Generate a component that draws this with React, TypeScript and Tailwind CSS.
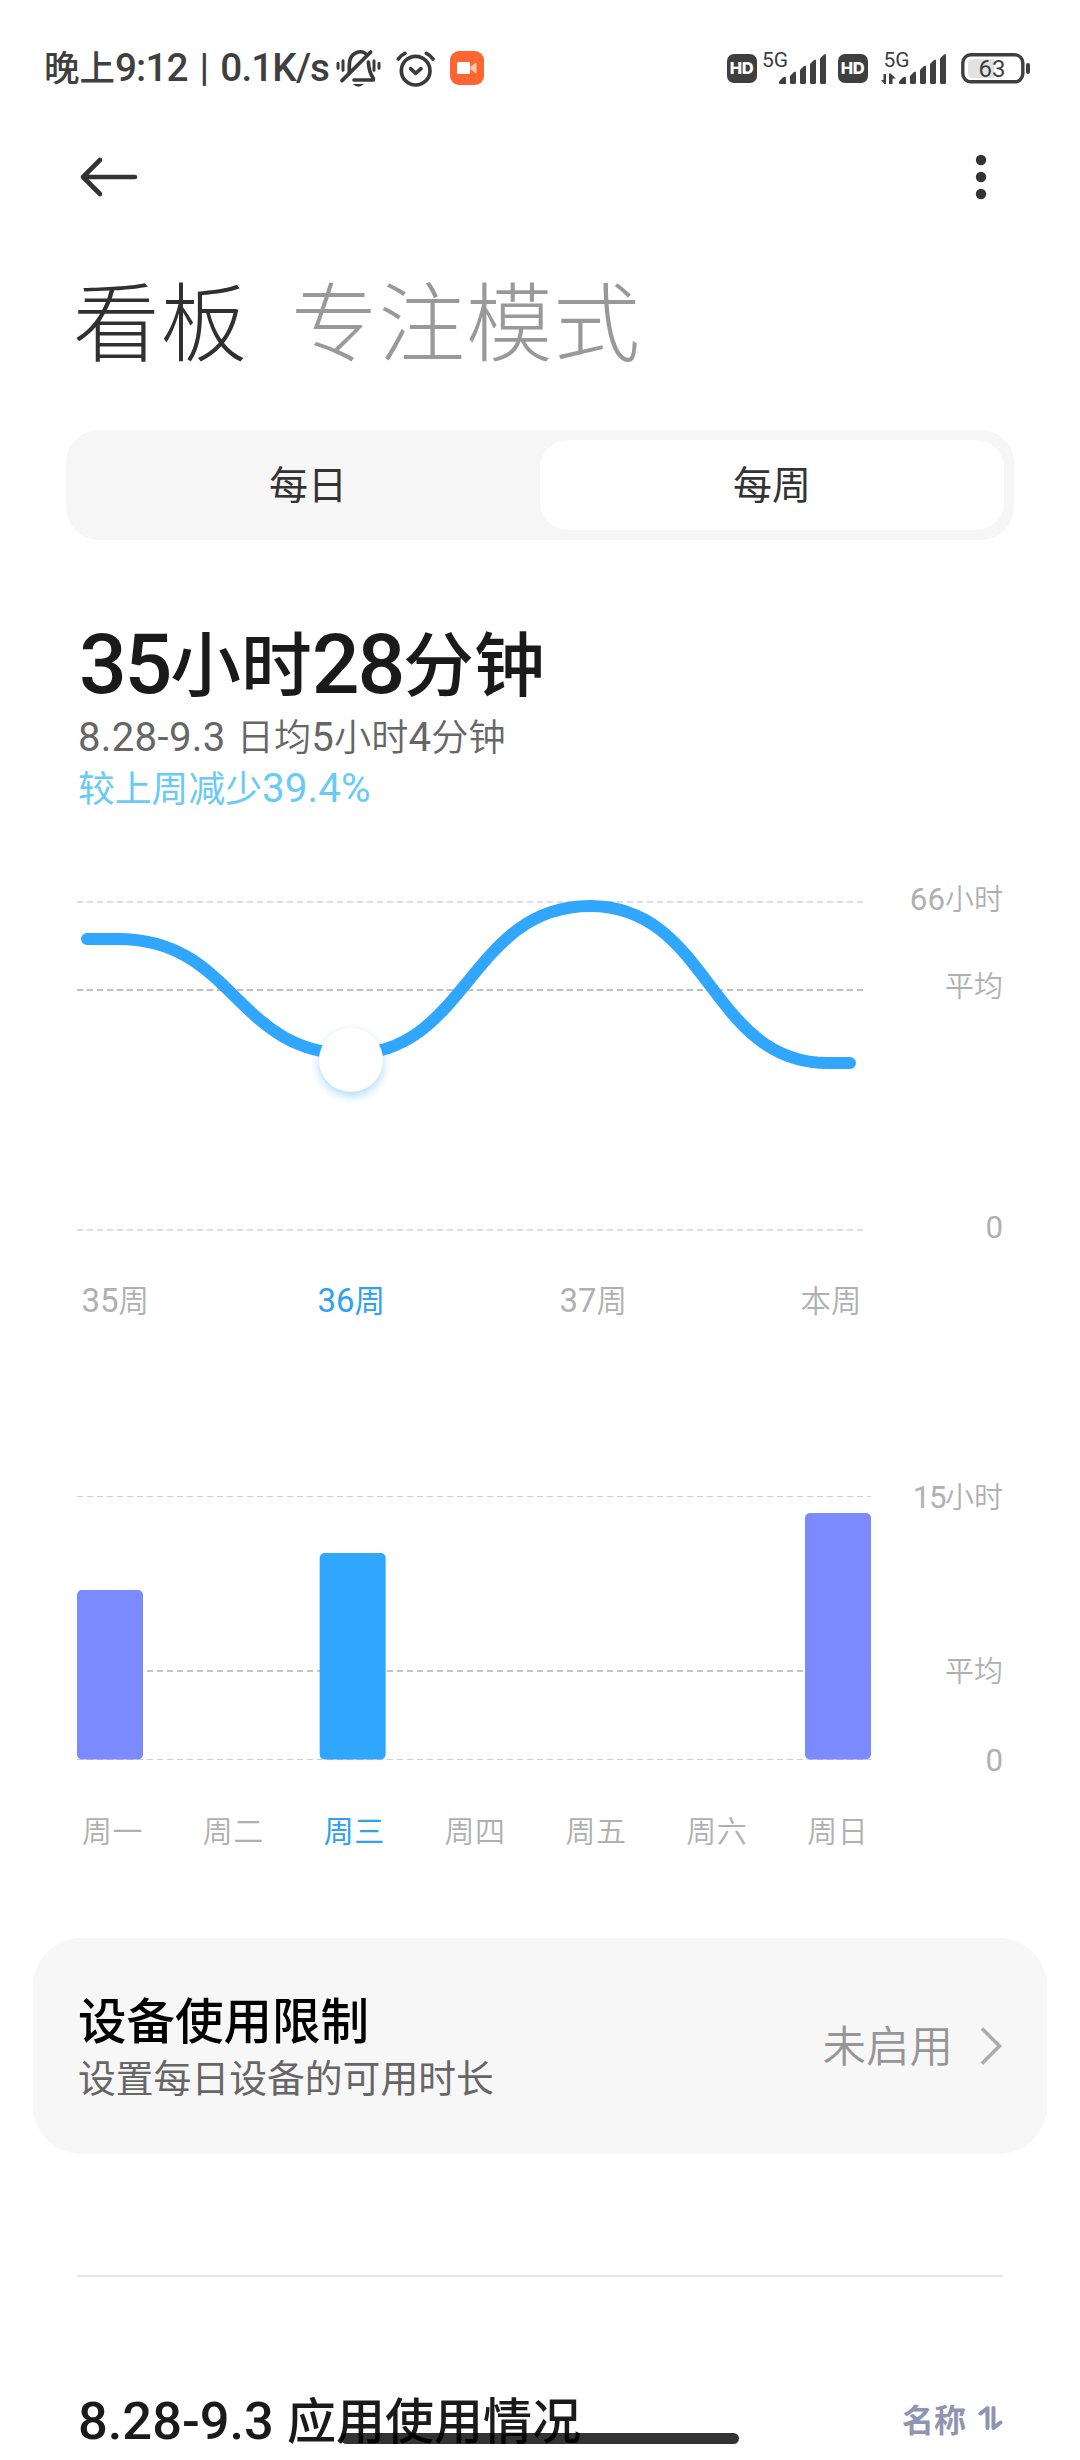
import type { ReactNode } from 'react';

const WEEKS = ['35周', '36周', '37周', '本周'];

const DAYS = [
  { label: '周一', height: 169.5 },
  { label: '周二', height: 0 },
  { label: '周三', height: 206.5, active: true },
  { label: '周四', height: 0 },
  { label: '周五', height: 0 },
  { label: '周六', height: 0 },
  { label: '周日', height: 246.5 },
];

// Latin runs are set in Roboto and a bit larger than the hanzi around them
function Mixed({ text, latin = 'text-[1.08em] font-normal' }: { text: string; latin?: string }) {
  return (
    <>
      {text.split(/([\x21-\x7e]+)/).map((part, i) =>
        i % 2 ? (
          <span key={i} className={`font-[Roboto] leading-[0] ${latin}`}>{part}</span>
        ) : (
          part
        ),
      )}
    </>
  );
}

function Line({ className, children }: { className: string; children: ReactNode }) {
  return <div className={`flex items-center whitespace-pre ${className}`}><span>{children}</span></div>;
}

function HdBadge() {
  return (
    <div className="flex h-[29px] w-[30px] items-center justify-center rounded-[7px] bg-[#3f3f3f] font-[Inter] text-[16.5px] font-extrabold leading-none tracking-[-0.5px] text-white">
      HD
    </div>
  );
}

function Signal({ data = false }: { data?: boolean }) {
  return (
    <svg width="66" height="44" viewBox="0 -4 66 44" fill="#3f3f3f">
      <text x={data ? 2.5 : 1} y="17" fontFamily="Roboto" fontSize="21">5G</text>
      {data && <path d="M5 24v10h-1.500L0 30h2.500v-6zM8 34V23.500h1.500L15 28.500h-3.500V34z" />}
      <path d="M18 31.500l4-4.200q3-1.500 3 1V34h-5.500q-1.500 0-1.500-1.500z" />
      <path d="M29 26l4-4q2-1.500 2 1v9.500q0 1.500-1.500 1.500h-3q-1.500 0-1.500-1.500z" />
      <path d="M39 20l4-4q2-1.500 2 1v15.500q0 1.500-1.500 1.500h-3q-1.500 0-1.500-1.500z" />
      <path d="M49 14l4-4q2-1.500 2 1v21.500q0 1.500-1.500 1.500h-3q-1.500 0-1.500-1.500z" />
      <path d="M59 8.500l4-4q2-1.500 2 1v27q0 1.500-1.500 1.500h-3q-1.500 0-1.500-1.500z" />
    </svg>
  );
}

function Battery() {
  return (
    <svg width="69" height="31" viewBox="0 0 69 31">
      <rect x="1.800" y="1.800" width="60" height="27" rx="8" fill="none" stroke="#3f3f3f" strokeWidth="3.400" />
      <path d="M12 6h21v19H12q-5 0-5-5v-9q0-5 5-5z" fill="#e2e2e2" />
      <rect x="65" y="10" width="4" height="11" rx="2" fill="#3f3f3f" />
      <text x="31" y="23.800" textAnchor="middle" fontFamily="Roboto" fontSize="24" fill="#3f3f3f">63</text>
    </svg>
  );
}

function MutedBell() {
  return (
    <svg width="45" height="40" viewBox="0 0 135 120" fill="none" stroke="#3a3a3a" strokeWidth="11" strokeLinecap="round">
      <path d="M40 74V50C40 10 82 2 92 21" />
      <path d="M18 98L104 12" />
      <path d="M97 42c2 26 6 37 15 49v5H54" strokeLinejoin="round" />
      <path d="M50 108h34q-17 16-34 0z" fill="#3a3a3a" stroke="none" />
      <path d="M6 46v15M21 38v29M114 38v29M129 46v15" strokeWidth="9" />
    </svg>
  );
}

function AlarmIcon() {
  return (
    <svg width="40" height="37" viewBox="0 0 120 111" fill="none" stroke="#3a3a3a" strokeWidth="11" strokeLinecap="round">
      <circle cx="59" cy="62" r="43" />
      <path d="M44 56l15 14 16-14" strokeLinejoin="round" />
      <path d="M7 27Q15 15 27 10M91 10q12 5 20 17" />
    </svg>
  );
}

function RecorderIcon() {
  return (
    <div className="flex h-[34px] w-[34px] items-center justify-center rounded-[9px] bg-[#fd6630]">
      <svg width="20" height="12" viewBox="0 0 20 12">
        <rect width="13" height="12" rx="1" fill="#fff" />
        <path d="M13.500 4.500l6-4v11l-6-4z" fill="#ffc9b3" />
      </svg>
    </div>
  );
}

function StatusBar() {
  return (
    <div className="flex h-[136px] items-center pr-[50px] pl-[44px] text-[#3f3f3f]">
      <Line className="h-[40px] w-[292px] pb-[4px] text-[35.5px] font-medium [word-spacing:4px]">
        <Mixed text="晚上9:12 | 0.1K/s" latin="text-[1.09em] font-medium tracking-[-0.9px]" />
      </Line>
      <MutedBell />
      <div className="ml-[15px] flex"><AlarmIcon /></div>
      <div className="ml-[14px]"><RecorderIcon /></div>
      <div className="ml-auto flex items-center">
        <HdBadge />
        <div className="mr-[10.5px] ml-[4.5px]"><Signal /></div>
        <HdBadge />
        <div className="mr-[14px] ml-[13.5px]"><Signal data /></div>
        <Battery />
      </div>
    </div>
  );
}

function Toolbar() {
  return (
    <div className="flex h-[82px] items-center justify-between pr-[93px] pl-[79px]">
      <svg width="60" height="44" viewBox="0 0 60 44" fill="none" stroke="#333" strokeWidth="4.600" strokeLinecap="round" strokeLinejoin="round">
        <path d="M56 22H4M21 5L4 22l17 17" />
      </svg>
      <svg width="12" height="46" viewBox="0 0 12 46" fill="#333">
        <circle cx="6" cy="6" r="5.200" />
        <circle cx="6" cy="23" r="5.200" />
        <circle cx="6" cy="40" r="5.200" />
      </svg>
    </div>
  );
}

function WeekTrend() {
  return (
    <section className="mt-[68px]">
      <div className="flex h-[370px] justify-between">
        <svg width="794" height="370" viewBox="77 880 794 370" fill="none">
          <path d="M77 902H863M77 1230H863" stroke="#dedede" strokeWidth="2" strokeDasharray="6 4" />
          <path d="M77 990H863" stroke="#bfbfbf" strokeWidth="2" strokeDasharray="6 4" />
          <path
            d="M87 939H118C235 939 235 1054 351 1054S470 906 590 906S709 1063 828 1063H850"
            stroke="#30a6ff"
            strokeWidth="12"
            strokeLinecap="round"
          />
          <foreignObject x="300" y="1010" width="102" height="110">
            <div className="mt-[18px] ml-[19px] h-[64px] w-[64px] rounded-full bg-white shadow-[0_4px_10px_rgba(48,166,255,0.4)]" />
          </foreignObject>
        </svg>
        <div className="flex flex-col items-end text-[29px] leading-[40px] font-[350] text-[#b0b0b0]">
          <span className="-mt-[3px]"><Mixed text="66小时" /></span>
          <span className="mt-[47px]">平均</span>
          <span className="mt-[201px]"><Mixed text="0" /></span>
        </div>
      </div>
      <div className="mt-[27px] grid h-[44px] grid-cols-[236px_242px_241px_auto] pl-[4.5px] text-[30.5px] leading-[44px] font-[350] text-[#b0b0b0]">
        {WEEKS.map((week) => (
          <span key={week} className={week === '36周' ? 'font-normal text-[#30a0f0]' : ''}>
            <Mixed text={week} />
          </span>
        ))}
      </div>
    </section>
  );
}

function DayBars() {
  return (
    <section className="mt-[159px]">
      <div className="flex h-[290px] justify-between">
        <svg width="794" height="290" viewBox="77 1480 794 290">
          <path d="M77 1496.500H871M77 1759.500H871" stroke="#cfcfcf" strokeWidth="1" strokeDasharray="6 4" />
          <path d="M77 1671H871" stroke="#c4c4c4" strokeWidth="2" strokeDasharray="6 4" />
          {DAYS.map((day, i) =>
            day.height ? (
              <rect
                key={day.label}
                x={77 + i * 121.33}
                y={1759.5 - day.height}
                width="66"
                height={day.height}
                rx="5"
                fill={day.active ? '#30a6ff' : '#7b8aff'}
              />
            ) : null,
          )}
        </svg>
        <div className="flex flex-col items-end text-[29px] leading-[40px] font-[350] text-[#b0b0b0]">
          <span className="-mt-[5px]">
            <Mixed text="15小时" latin="text-[1.08em] font-normal tracking-[-1.5px]" />
          </span>
          <span className="mt-[134px]">平均</span>
          <span className="mt-[49px]"><Mixed text="0" /></span>
        </div>
      </div>
      <div className="mt-[37px] grid h-[44px] w-[851px] grid-cols-7 pl-[5px] text-[30px] leading-[44px] font-[350] tracking-[0.5px] text-[#b0b0b0]">
        {DAYS.map((day) => (
          <span key={day.label} className={day.active ? 'font-normal text-[#30a0f0]' : ''}>{day.label}</span>
        ))}
      </div>
    </section>
  );
}

function LimitCard() {
  return (
    <div className="mx-[33px] mt-[87px] flex h-[216px] items-center rounded-[48px] bg-[#f7f7f7] pr-[45px] pl-[45px]">
      <div className="pt-[3px]">
        <Line className="h-[59px] text-[48.5px] font-medium text-black">设备使用限制</Line>
        <Line className="h-[58px] pb-px text-[37.8px] font-[380] text-[#666]">设置每日设备的可用时长</Line>
      </div>
      <Line className="ml-auto h-[60px] pb-[5px] text-[43.5px] font-[350] text-[#969696]">未启用</Line>
      <svg className="ml-[27px]" width="22" height="40" viewBox="0 0 22 40" fill="none" stroke="#ababab" strokeWidth="3.500">
        <path d="M2 2.500L19.500 20 2 37.500" />
      </svg>
    </div>
  );
}

export default function App() {
  return (
    <div className="relative h-[2460px] w-[1080px] overflow-hidden bg-white font-['Noto_Sans_CJK_SC',sans-serif]">
      <StatusBar />
      <Toolbar />

      <div className="flex h-[208px] items-center gap-[43px] pb-[8px] pl-[73px] text-[86.5px] leading-none font-light tracking-[1px]">
        <span className="text-[#303030]">看板</span>
        <span className="text-[#999]">专注模式</span>
      </div>

      {/* Day / week switch */}
      <div className="mx-[66px] mt-[4px] grid h-[110px] grid-cols-2 rounded-[33px] bg-[#f6f6f6] p-[10px] text-center text-[39px] leading-[84px] text-[#333]">
        <div>每日</div>
        <div className="rounded-[28px] bg-white">每周</div>
      </div>

      <main className="px-[77px]">
        <Line className="mt-[77px] h-[86px] pl-[2px] text-[70.8px] font-medium text-[#1a1a1a]">
          <Mixed text="35小时28分钟" latin="text-[1.19em] font-medium tracking-[-0.027em] align-[-2px]" />
        </Line>
        <Line className="mt-[7px] h-[51px] pl-px text-[37.2px] font-[350] text-[#666] [word-spacing:3px]">
          <Mixed text="8.28-9.3 日均5小时4分钟" latin="text-[1.08em] font-normal tracking-[0.3px]" />
        </Line>
        <Line className="h-[51px] pl-px text-[36.8px] font-[380] text-[#69cbf5]">
          <Mixed text="较上周减少39.4%" latin="text-[1.1em] font-normal" />
        </Line>
        <WeekTrend />
        <DayBars />
      </main>

      <LimitCard />

      <div className="mx-[77px] mt-[121px] h-[2px] bg-[#e5e5e5]" />
      <div className="mx-[77px] mt-[101px] flex h-[80px] items-center justify-between">
        <Line className="h-[74px] pl-px text-[49px] font-medium text-[#1a1a1a] [word-spacing:2px]">
          <Mixed text="8.28-9.3 应用使用情况" latin="text-[1.07em] font-medium" />
        </Line>
        <div className="flex items-center gap-[12px]">
          <span className="text-[32px] font-bold text-[#8f94b3]">名称</span>
          <svg width="25" height="26" viewBox="0 0 25 26" fill="none" stroke="#8f94b3" strokeWidth="4" strokeLinecap="round" strokeLinejoin="round">
            <path d="M2.500 8.500L9.500 3v20M15.500 3v20l7-5.500" />
          </svg>
        </div>
      </div>

      {/* Gesture bar */}
      <div className="absolute bottom-[16px] left-[341px] h-[11px] w-[398px] rounded-full bg-black/80" />
    </div>
  );
}
